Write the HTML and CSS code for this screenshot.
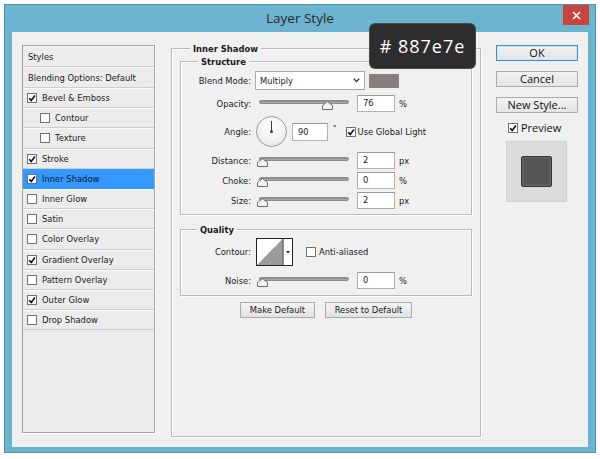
FILE: index.html
```html
<!DOCTYPE html>
<html>
<head>
<meta charset="utf-8">
<title>Layer Style</title>
<link rel="stylesheet" href="styles.css">
</head>
<body>
<div class="page">
  <div class="window">
    <div class="titlebar">
      <span></span>
      <div class="title">Layer Style</div>
      <div class="close">
        <svg width="9" height="9" viewBox="0 0 9 9"><path d="M1 1 L8 8 M8 1 L1 8" stroke="#fff" stroke-width="1.6"/></svg>
      </div>
    </div>
    <div class="client">
      <div class="list">
        <div class="row head">Styles</div>
        <div class="row head">Blending Options: Default</div>
        <div class="row"><span class="cb on"><svg viewBox="0 0 8 8"><path d="M1.2 4.2 L3.2 6.4 L6.9 1.4"/></svg></span>Bevel &amp; Emboss</div>
        <div class="row sub"><span class="cb"></span>Contour</div>
        <div class="row sub"><span class="cb"></span>Texture</div>
        <div class="row"><span class="cb on"><svg viewBox="0 0 8 8"><path d="M1.2 4.2 L3.2 6.4 L6.9 1.4"/></svg></span>Stroke</div>
        <div class="row sel"><span class="cb on"><svg viewBox="0 0 8 8"><path d="M1.2 4.2 L3.2 6.4 L6.9 1.4"/></svg></span>Inner Shadow</div>
        <div class="row"><span class="cb"></span>Inner Glow</div>
        <div class="row"><span class="cb"></span>Satin</div>
        <div class="row"><span class="cb"></span>Color Overlay</div>
        <div class="row"><span class="cb on"><svg viewBox="0 0 8 8"><path d="M1.2 4.2 L3.2 6.4 L6.9 1.4"/></svg></span>Gradient Overlay</div>
        <div class="row"><span class="cb"></span>Pattern Overlay</div>
        <div class="row"><span class="cb on"><svg viewBox="0 0 8 8"><path d="M1.2 4.2 L3.2 6.4 L6.9 1.4"/></svg></span>Outer Glow</div>
        <div class="row"><span class="cb"></span>Drop Shadow</div>
      </div>

      <div class="main">
        <div class="group outer">
          <div class="legend l-outer">Inner Shadow</div>

          <div class="group inner structure">
            <div class="legend l-struct">Structure</div>

            <div class="field f-blend">
              <span class="lbl">Blend Mode:</span>
              <div class="select">
                <span>Multiply</span>
                <svg width="7" height="5" viewBox="0 0 7 5"><path d="M0.8 0.8 L3.5 3.6 L6.2 0.8" fill="none" stroke="#333" stroke-width="1.3"/></svg>
              </div>
              <span class="swatch"></span>
            </div>

            <div class="field f-op">
              <span class="lbl">Opacity:</span>
              <div class="slider"><div class="track"></div><svg class="thumb" style="--v:76" width="11" height="9" viewBox="0 0 11 9"><path d="M0.5 8.5 V4.5 L5.5 0.6 L10.5 4.5 V8.5 Z"/></svg></div>
              <div class="input">76</div>
              <span class="unit">%</span>
            </div>

            <div class="field f-angle">
              <span class="lbl">Angle:</span>
              <div class="dial"><span class="needle"></span><span class="dot"></span></div>
              <div class="input in-angle">90</div>
              <span class="deg">°</span>
              <span class="cb on cb-glob"><svg viewBox="0 0 8 8"><path d="M1.2 4.2 L3.2 6.4 L6.9 1.4"/></svg></span>
              <span class="cb-text">Use Global Light</span>
            </div>

            <div class="field f-dist">
              <span class="lbl">Distance:</span>
              <div class="slider"><div class="track"></div><svg class="thumb" style="--v:0" width="11" height="9" viewBox="0 0 11 9"><path d="M0.5 8.5 V4.5 L5.5 0.6 L10.5 4.5 V8.5 Z"/></svg></div>
              <div class="input">2</div>
              <span class="unit">px</span>
            </div>

            <div class="field f-tight">
              <span class="lbl">Choke:</span>
              <div class="slider"><div class="track"></div><svg class="thumb" style="--v:0" width="11" height="9" viewBox="0 0 11 9"><path d="M0.5 8.5 V4.5 L5.5 0.6 L10.5 4.5 V8.5 Z"/></svg></div>
              <div class="input">0</div>
              <span class="unit">%</span>
            </div>

            <div class="field f-tight">
              <span class="lbl">Size:</span>
              <div class="slider"><div class="track"></div><svg class="thumb" style="--v:0" width="11" height="9" viewBox="0 0 11 9"><path d="M0.5 8.5 V4.5 L5.5 0.6 L10.5 4.5 V8.5 Z"/></svg></div>
              <div class="input">2</div>
              <span class="unit">px</span>
            </div>
          </div>

          <div class="group inner quality">
            <div class="legend l-qual">Quality</div>

            <div class="field f-contour">
              <span class="lbl">Contour:</span>
              <svg class="contour" width="37" height="28" viewBox="0 0 37 28">
                <rect x="0.5" y="0.5" width="36" height="27" fill="#fff" stroke="#222"/>
                <polygon points="1,27 26.5,1 26.5,27" fill="#9b9b9b"/>
                <line x1="27" y1="0.5" x2="27" y2="27.5" stroke="#222"/>
                <polygon points="30,13 34,13 32,15.5" fill="#222"/>
              </svg>
              <span class="cb cb-anti"></span>
              <span class="cb-text">Anti-aliased</span>
            </div>

            <div class="field f-noise">
              <span class="lbl">Noise:</span>
              <div class="slider"><div class="track"></div><svg class="thumb" style="--v:0" width="11" height="9" viewBox="0 0 11 9"><path d="M0.5 8.5 V4.5 L5.5 0.6 L10.5 4.5 V8.5 Z"/></svg></div>
              <div class="input">0</div>
              <span class="unit">%</span>
            </div>
          </div>

          <div class="btnrow">
            <div class="sbtn b-make">Make Default</div>
            <div class="sbtn b-reset">Reset to Default</div>
          </div>
        </div>
      </div>

      <div class="side">
        <div class="btn ok">OK</div>
        <div class="btn">Cancel</div>
        <div class="btn">New Style...</div>
        <div class="pv-row">
          <span class="cb on"><svg viewBox="0 0 8 8"><path d="M1.2 4.2 L3.2 6.4 L6.9 1.4"/></svg></span>
          <span class="pv-label">Preview</span>
        </div>
        <div class="pv">
          <div class="pv-sq"></div>
        </div>
      </div>
    </div>
  </div>
  <div class="tooltip"># 887e7e</div>
</div>
</body>
</html>
```

FILE: styles.css
```css
* { box-sizing: border-box; }

body {
  margin: 0;
  background: #ffffff;
  font-family: "DejaVu Sans", "Liberation Sans", sans-serif;
  font-size: 8.4px;
  color: #1b1b1b;
}

.page {
  position: relative;
  width: 600px;
  height: 459px;
  padding: 4px;
}

.window {
  width: 592px;
  height: 449px;
  background: #6cb3cf;
  border: 1px solid #4f93ad;
  display: flex;
  flex-direction: column;
}

.titlebar {
  height: 27px;
  flex: none;
  display: grid;
  grid-template-columns: 1fr auto 1fr;
  align-items: start;
}

.title {
  font-family: "Open Sans", sans-serif;
  font-size: 13.5px;
  line-height: 27px;
  color: #2a2a2a;
}

.close {
  justify-self: end;
  width: 26px;
  height: 20px;
  margin-right: 6px;
  background: #c8443d;
  display: flex;
  align-items: center;
  justify-content: center;
}

.client {
  flex: 1;
  margin: 0 7px 5px;
  background: #f0f0f0;
  display: flex;
  align-items: flex-start;
  padding: 13px 0 0 10px;
}

/* ---------- styles list ---------- */
.list {
  width: 133px;
  height: 388px;
  flex: none;
  border: 1px solid #a2a2a2;
  background: #ececec;
  box-shadow: 1px 1px 0 #ffffff;
}

.row {
  height: 20.2px;
  display: flex;
  align-items: center;
  padding-left: 4px;
  border-top: 1px solid #fbfbfb;
  border-bottom: 1px solid #cfcfcf;
  white-space: nowrap;
}

.row.head {
  height: 21px;
  padding-left: 5px;
}

.row.sub { padding-left: 17px; }

.row.sel {
  background: #3399ff;
  border-top-color: #3399ff;
  border-bottom-color: #3399ff;
  color: #0c1830;
}

.cb {
  width: 10px;
  height: 10px;
  flex: none;
  border: 1px solid #707070;
  background: #ffffff;
  margin-right: 5px;
  display: inline-flex;
}

.cb svg {
  width: 8px;
  height: 8px;
}

.cb svg path {
  fill: none;
  stroke: #111;
  stroke-width: 1.6;
}

/* ---------- main ---------- */
.main {
  width: 310px;
  flex: none;
  margin-left: 16px;
  margin-top: 3px;
}

.group {
  border: 1px solid #b9b9b9;
  box-shadow: 1px 1px 0 #ffffff, inset 1px 1px 0 #ffffff;
}

.group.outer {
  height: 389px;
  padding: 0 8px;
}

.legend {
  width: max-content;
  margin-top: -6px;
  padding: 0 3px;
  line-height: 12px;
  height: 12px;
  font-weight: bold;
  background: #f0f0f0;
}

.l-outer { margin-left: 10px; }
.l-struct { margin-left: 17px; }
.l-qual { margin-left: 16px; }

.group.inner.structure {
  margin-top: 6px;
  padding-bottom: 5px;
}

.group.inner.quality {
  margin-top: 14px;
  padding-bottom: 6px;
}

.field {
  display: flex;
  align-items: center;
  height: 17px;
}

.lbl {
  width: 70px;
  flex: none;
  text-align: right;
  white-space: nowrap;
}

.f-blend { height: 19px; margin-top: 3px; }
.f-op { margin-top: 5px; }
.f-angle { height: 31px; margin-top: 4px; }
.f-dist { margin-top: 5px; }
.f-tight { margin-top: 3px; }
.f-contour { height: 28px; margin-top: 2px; }
.f-noise { margin-top: 6px; }

.select {
  width: 110px;
  height: 19px;
  margin-left: 4px;
  background: #ffffff;
  border: 1px solid #a9a9a9;
  display: flex;
  align-items: center;
  justify-content: space-between;
  padding: 0 4px 0 4px;
}

.swatch {
  width: 30px;
  height: 14px;
  margin-left: 4px;
  background: #887e7e;
}

.slider {
  position: relative;
  width: 90px;
  height: 17px;
  margin-left: 8px;
}

.track {
  margin-top: 5px;
  height: 4px;
  border-radius: 2px;
  background: linear-gradient(#7f7f7f, #b9b9b9);
  border: 1px solid #8d8d8d;
}

.thumb {
  position: absolute;
  top: 6px;
  left: calc(var(--v) * 0.86px - 2.5px);
}

.thumb path {
  fill: #f3f3f3;
  stroke: #6d6d6d;
}

.input {
  width: 38px;
  height: 17px;
  margin-left: 8px;
  background: #ffffff;
  border: 1px solid #b0b0b0;
  border-top-color: #9a9a9a;
  padding-left: 5px;
  line-height: 15px;
}

.unit { margin-left: 4px; }

.dial {
  position: relative;
  width: 31px;
  height: 31px;
  margin-left: 5px;
  border-radius: 50%;
  border: 1px solid #9c9c9c;
  background: radial-gradient(circle at 50% 35%, #ffffff 0%, #f4f4f4 50%, #dedede 100%);
}

.needle {
  position: absolute;
  left: 14px;
  top: 4px;
  width: 1px;
  height: 11px;
  background: #3a3a3a;
}

.dot {
  position: absolute;
  left: 13px;
  top: 13px;
  width: 3px;
  height: 3px;
  border-radius: 50%;
  background: #3a3a3a;
}

.input.in-angle {
  width: 36px;
  height: 18px;
  margin-left: 5px;
  line-height: 16px;
}

.deg {
  margin-left: 5px;
  margin-top: -7px;
  font-size: 7px;
}

.cb-glob {
  margin-left: 9px;
  margin-right: 2px;
}

.cb-text { white-space: nowrap; }

.contour {
  margin-left: 5px;
  flex: none;
}

.cb-anti {
  margin-left: 13px;
  margin-right: 3px;
}

.btnrow {
  margin-top: 6px;
  display: flex;
  justify-content: center;
  gap: 10px;
}

.sbtn {
  height: 16px;
  border: 1px solid #acacac;
  background: linear-gradient(#f4f4f4, #e2e2e2);
  text-align: center;
  line-height: 14px;
  white-space: nowrap;
}

.b-make { width: 75px; }
.b-reset { width: 87px; }

/* ---------- side ---------- */
.side {
  width: 82px;
  flex: none;
  margin-left: 15px;
  display: flex;
  flex-direction: column;
  font-family: "Open Sans", sans-serif;
  font-size: 11px;
}

.btn {
  height: 16px;
  margin-bottom: 10px;
  border: 1px solid #acacac;
  background: linear-gradient(#f2f2f2, #e4e4e4);
  text-align: center;
  line-height: 14px;
  color: #111;
}

.btn.ok {
  border-color: #3c8fd6;
  box-shadow: inset 0 0 0 1px #cde4f7;
}

.pv-row {
  display: flex;
  align-items: center;
  height: 11px;
  margin-top: -1px;
  padding-left: 12px;
}

.pv-row .cb { margin-right: 3px; }

.pv-label {
  line-height: 11px;
  color: #111;
}

.pv {
  width: 61px;
  height: 61px;
  margin: 8px 0 0 10px;
  background: #dcdcdc;
  border: 1px solid #d2d2d2;
  display: flex;
  align-items: center;
  justify-content: center;
}

.pv-sq {
  width: 31px;
  height: 31px;
  background: #565656;
  border: 1px solid #333333;
  border-radius: 2px;
  box-shadow: inset 0 0 0 1px #666666;
}

/* ---------- tooltip overlay ---------- */
.tooltip {
  position: absolute;
  left: 370px;
  top: 24px;
  width: 105px;
  height: 44px;
  background: #2d2d2d;
  border-radius: 5px;
  box-shadow: 0 0 0 1px #4a4a4a;
  color: #ffffff;
  font-family: "Open Sans", sans-serif;
  font-size: 18px;
  letter-spacing: 1px;
  display: flex;
  align-items: center;
  justify-content: center;
}
```
